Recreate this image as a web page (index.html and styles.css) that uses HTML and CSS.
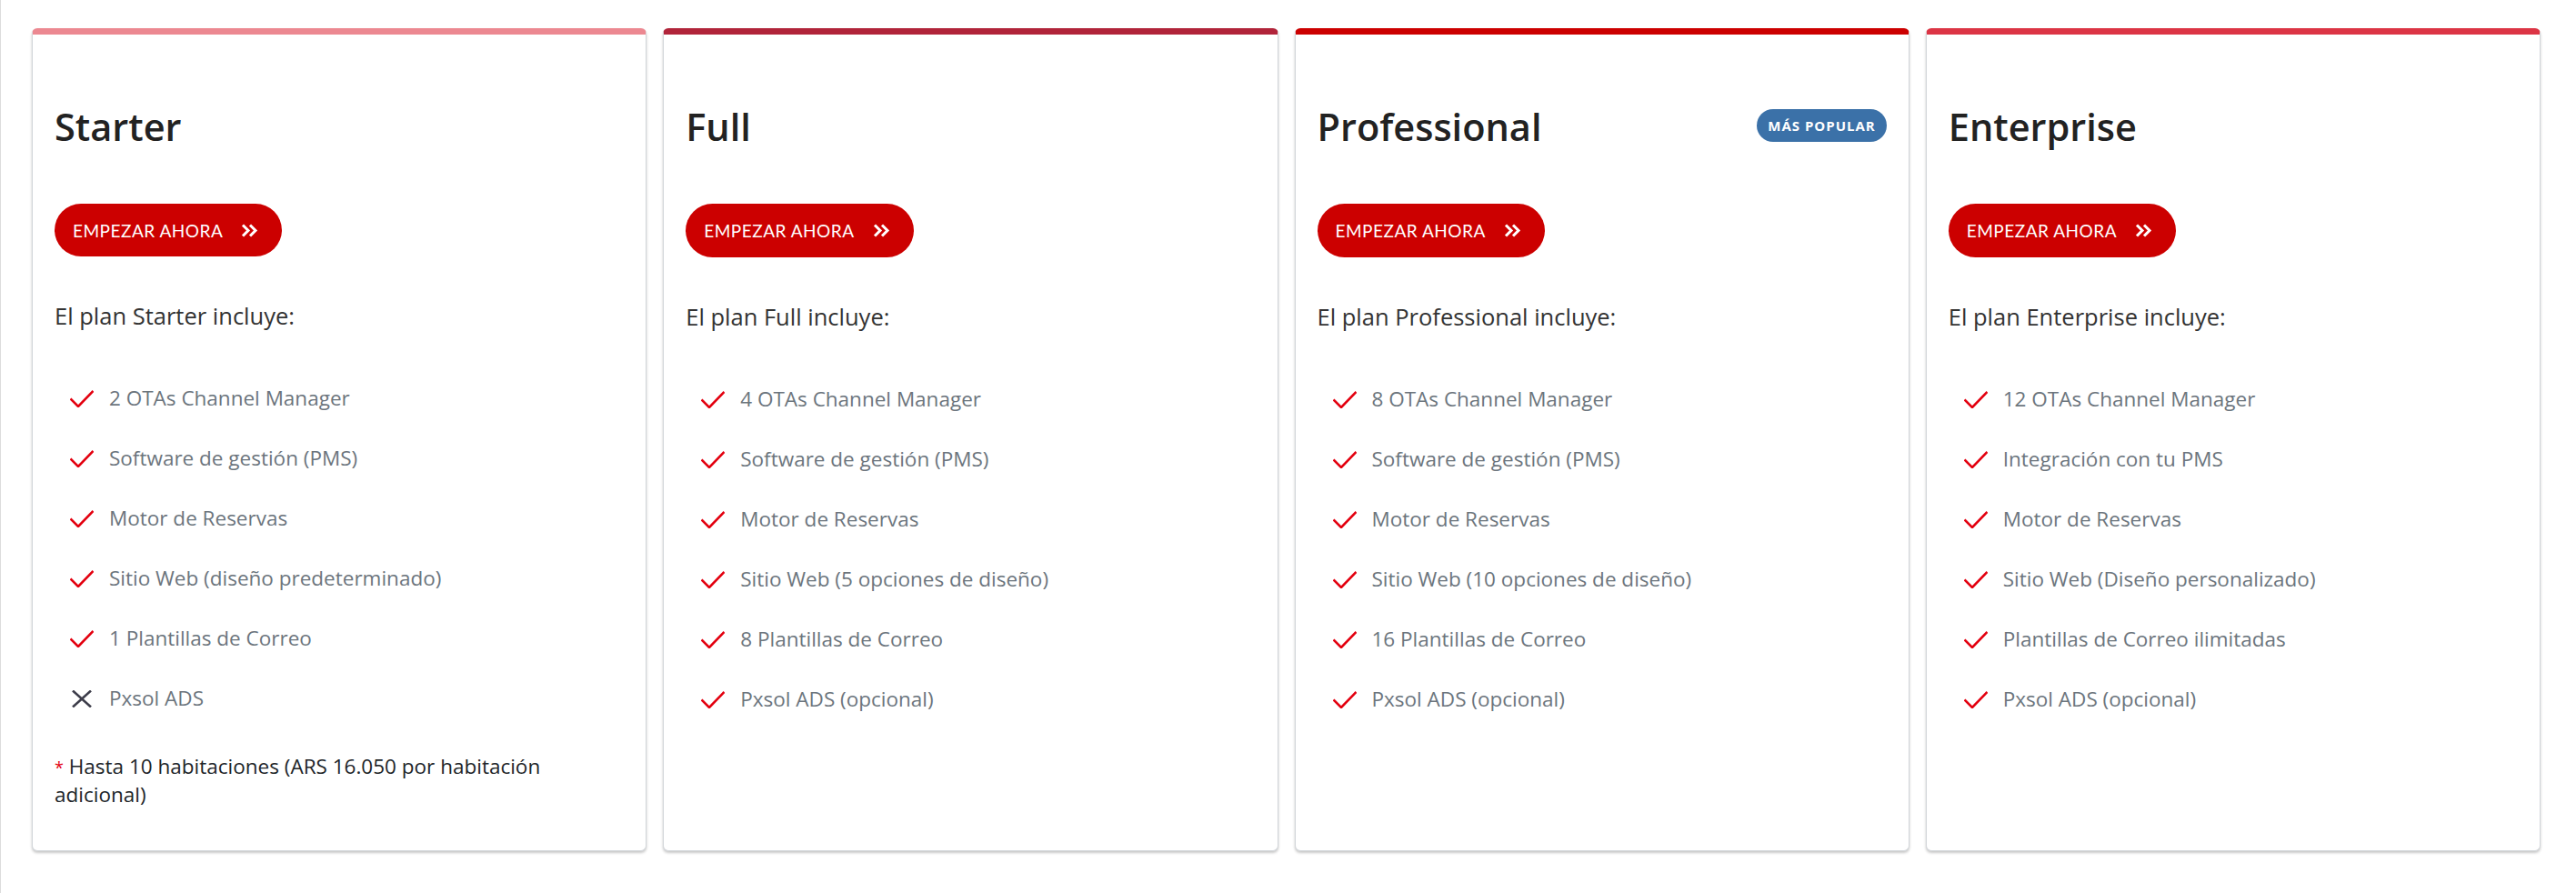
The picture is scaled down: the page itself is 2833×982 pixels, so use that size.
FILE: index.html
```html
<!DOCTYPE html>
<html lang="es">
<head>
<meta charset="utf-8">
<title>Planes</title>
<link rel="stylesheet" href="styles.css">
</head>
<body>
<div class="page">
  <div class="plans">
    <!-- Starter -->
    <div class="card card--starter">
      <div class="card-head">
        <h2 class="plan-name">Starter</h2>
      </div>
      <a class="btn" href="#">EMPEZAR AHORA
        <svg class="btn-ico" width="20" height="15" viewBox="0 0 20 15"><path d="M3 1.5 L9 7.5 L3 13.5 M11 1.5 L17 7.5 L11 13.5" fill="none" stroke="#fff" stroke-width="3"/></svg>
      </a>
      <p class="includes">El plan Starter incluye:</p>
      <ul class="features">
        <li><svg class="ico" width="26" height="19" viewBox="0 0 26 19"><path d="M0.5 9.5 L9 18 L25.5 1" fill="none" stroke="#e3000f" stroke-width="2.6"/></svg>2 OTAs Channel Manager</li>
        <li><svg class="ico" width="26" height="19" viewBox="0 0 26 19"><path d="M0.5 9.5 L9 18 L25.5 1" fill="none" stroke="#e3000f" stroke-width="2.6"/></svg>Software de gestión (PMS)</li>
        <li><svg class="ico" width="26" height="19" viewBox="0 0 26 19"><path d="M0.5 9.5 L9 18 L25.5 1" fill="none" stroke="#e3000f" stroke-width="2.6"/></svg>Motor de Reservas</li>
        <li><svg class="ico" width="26" height="19" viewBox="0 0 26 19"><path d="M0.5 9.5 L9 18 L25.5 1" fill="none" stroke="#e3000f" stroke-width="2.6"/></svg>Sitio Web (diseño predeterminado)</li>
        <li><svg class="ico" width="26" height="19" viewBox="0 0 26 19"><path d="M0.5 9.5 L9 18 L25.5 1" fill="none" stroke="#e3000f" stroke-width="2.6"/></svg>1 Plantillas de Correo</li>
        <li><svg class="ico" width="26" height="19" viewBox="0 0 26 19"><path d="M3 0.5 L23 18.5 M23 0.5 L3 18.5" fill="none" stroke="#3d3d4a" stroke-width="2.6"/></svg>Pxsol ADS</li>
      </ul>
      <p class="note"><span class="ast">*</span> Hasta 10 habitaciones (ARS 16.050 por habitación adicional)</p>
    </div>

    <!-- Full -->
    <div class="card card--full">
      <div class="card-head">
        <h2 class="plan-name">Full</h2>
      </div>
      <a class="btn" href="#">EMPEZAR AHORA
        <svg class="btn-ico" width="20" height="15" viewBox="0 0 20 15"><path d="M3 1.5 L9 7.5 L3 13.5 M11 1.5 L17 7.5 L11 13.5" fill="none" stroke="#fff" stroke-width="3"/></svg>
      </a>
      <p class="includes">El plan Full incluye:</p>
      <ul class="features">
        <li><svg class="ico" width="26" height="19" viewBox="0 0 26 19"><path d="M0.5 9.5 L9 18 L25.5 1" fill="none" stroke="#e3000f" stroke-width="2.6"/></svg>4 OTAs Channel Manager</li>
        <li><svg class="ico" width="26" height="19" viewBox="0 0 26 19"><path d="M0.5 9.5 L9 18 L25.5 1" fill="none" stroke="#e3000f" stroke-width="2.6"/></svg>Software de gestión (PMS)</li>
        <li><svg class="ico" width="26" height="19" viewBox="0 0 26 19"><path d="M0.5 9.5 L9 18 L25.5 1" fill="none" stroke="#e3000f" stroke-width="2.6"/></svg>Motor de Reservas</li>
        <li><svg class="ico" width="26" height="19" viewBox="0 0 26 19"><path d="M0.5 9.5 L9 18 L25.5 1" fill="none" stroke="#e3000f" stroke-width="2.6"/></svg>Sitio Web (5 opciones de diseño)</li>
        <li><svg class="ico" width="26" height="19" viewBox="0 0 26 19"><path d="M0.5 9.5 L9 18 L25.5 1" fill="none" stroke="#e3000f" stroke-width="2.6"/></svg>8 Plantillas de Correo</li>
        <li><svg class="ico" width="26" height="19" viewBox="0 0 26 19"><path d="M0.5 9.5 L9 18 L25.5 1" fill="none" stroke="#e3000f" stroke-width="2.6"/></svg>Pxsol ADS (opcional)</li>
      </ul>
    </div>

    <!-- Professional -->
    <div class="card card--pro">
      <div class="card-head">
        <h2 class="plan-name">Professional</h2>
        <span class="badge">MÁS POPULAR</span>
      </div>
      <a class="btn" href="#">EMPEZAR AHORA
        <svg class="btn-ico" width="20" height="15" viewBox="0 0 20 15"><path d="M3 1.5 L9 7.5 L3 13.5 M11 1.5 L17 7.5 L11 13.5" fill="none" stroke="#fff" stroke-width="3"/></svg>
      </a>
      <p class="includes">El plan Professional incluye:</p>
      <ul class="features">
        <li><svg class="ico" width="26" height="19" viewBox="0 0 26 19"><path d="M0.5 9.5 L9 18 L25.5 1" fill="none" stroke="#e3000f" stroke-width="2.6"/></svg>8 OTAs Channel Manager</li>
        <li><svg class="ico" width="26" height="19" viewBox="0 0 26 19"><path d="M0.5 9.5 L9 18 L25.5 1" fill="none" stroke="#e3000f" stroke-width="2.6"/></svg>Software de gestión (PMS)</li>
        <li><svg class="ico" width="26" height="19" viewBox="0 0 26 19"><path d="M0.5 9.5 L9 18 L25.5 1" fill="none" stroke="#e3000f" stroke-width="2.6"/></svg>Motor de Reservas</li>
        <li><svg class="ico" width="26" height="19" viewBox="0 0 26 19"><path d="M0.5 9.5 L9 18 L25.5 1" fill="none" stroke="#e3000f" stroke-width="2.6"/></svg>Sitio Web (10 opciones de diseño)</li>
        <li><svg class="ico" width="26" height="19" viewBox="0 0 26 19"><path d="M0.5 9.5 L9 18 L25.5 1" fill="none" stroke="#e3000f" stroke-width="2.6"/></svg>16 Plantillas de Correo</li>
        <li><svg class="ico" width="26" height="19" viewBox="0 0 26 19"><path d="M0.5 9.5 L9 18 L25.5 1" fill="none" stroke="#e3000f" stroke-width="2.6"/></svg>Pxsol ADS (opcional)</li>
      </ul>
    </div>

    <!-- Enterprise -->
    <div class="card card--ent">
      <div class="card-head">
        <h2 class="plan-name">Enterprise</h2>
      </div>
      <a class="btn" href="#">EMPEZAR AHORA
        <svg class="btn-ico" width="20" height="15" viewBox="0 0 20 15"><path d="M3 1.5 L9 7.5 L3 13.5 M11 1.5 L17 7.5 L11 13.5" fill="none" stroke="#fff" stroke-width="3"/></svg>
      </a>
      <p class="includes">El plan Enterprise incluye:</p>
      <ul class="features">
        <li><svg class="ico" width="26" height="19" viewBox="0 0 26 19"><path d="M0.5 9.5 L9 18 L25.5 1" fill="none" stroke="#e3000f" stroke-width="2.6"/></svg>12 OTAs Channel Manager</li>
        <li><svg class="ico" width="26" height="19" viewBox="0 0 26 19"><path d="M0.5 9.5 L9 18 L25.5 1" fill="none" stroke="#e3000f" stroke-width="2.6"/></svg>Integración con tu PMS</li>
        <li><svg class="ico" width="26" height="19" viewBox="0 0 26 19"><path d="M0.5 9.5 L9 18 L25.5 1" fill="none" stroke="#e3000f" stroke-width="2.6"/></svg>Motor de Reservas</li>
        <li><svg class="ico" width="26" height="19" viewBox="0 0 26 19"><path d="M0.5 9.5 L9 18 L25.5 1" fill="none" stroke="#e3000f" stroke-width="2.6"/></svg>Sitio Web (Diseño personalizado)</li>
        <li><svg class="ico" width="26" height="19" viewBox="0 0 26 19"><path d="M0.5 9.5 L9 18 L25.5 1" fill="none" stroke="#e3000f" stroke-width="2.6"/></svg>Plantillas de Correo ilimitadas</li>
        <li><svg class="ico" width="26" height="19" viewBox="0 0 26 19"><path d="M0.5 9.5 L9 18 L25.5 1" fill="none" stroke="#e3000f" stroke-width="2.6"/></svg>Pxsol ADS (opcional)</li>
      </ul>
    </div>
  </div>
</div>
</body>
</html>
```

FILE: styles.css
```css
* { box-sizing: border-box; }

html, body {
  margin: 0;
  padding: 0;
  background: #fff;
}

body {
  font-family: "Open Sans", "Noto Sans", sans-serif;
  color: #212529;
}

.page {
  min-height: 982px;
  border-left: 1px solid #dcdcdc;
  padding: 31px 39px 0 34px;
}

.plans {
  display: grid;
  grid-template-columns: repeat(4, 1fr);
  column-gap: 18px;
  align-items: stretch;
}

.card {
  background: #fff;
  border: 1px solid #d2d6da;
  border-top: 7px solid #ec8891;
  border-radius: 6px;
  box-shadow: 0 2px 3px rgba(0, 0, 0, 0.22);
  padding: 77px 24px 46px 24px;
  display: flex;
  flex-direction: column;
  align-items: flex-start;
  height: 905px;
}

.card--starter { border-top-color: #ec8891; }
.card--full { border-top-color: #b1243a; }
.card--pro { border-top-color: #cc0000; }
.card--ent { border-top-color: #dc3545; }

.card-head {
  width: 100%;
  display: flex;
  align-items: center;
  justify-content: space-between;
}

.plan-name {
  margin: 0;
  font-size: 41.5px;
  line-height: 48px;
  font-weight: 600;
  color: #222;
}

.badge {
  background: #3b71a8;
  color: #fff;
  font-size: 15px;
  font-weight: 700;
  letter-spacing: 1px;
  line-height: 36px;
  height: 36px;
  padding: 0 12px;
  border-radius: 18px;
  margin-top: -2px;
}

.btn {
  margin-top: 61px;
  height: 59px;
  display: inline-flex;
  align-items: center;
  gap: 19px;
  padding: 0 26px 0 20px;
  background: #cc0000;
  color: #fff;
  border-radius: 30px;
  text-decoration: none;
  font-family: "Lato", "Open Sans", sans-serif;
  font-size: 19px;
  letter-spacing: 0.5px;
  font-weight: 400;
}

.btn-ico { display: block; }

.includes {
  margin: 49px 0 0 0;
  font-size: 25.5px;
  line-height: 32px;
  color: #333;
}

.features {
  list-style: none;
  margin: 42px 0 0 0;
  padding: 0 0 0 17px;
}

.features li {
  display: flex;
  align-items: center;
  gap: 17px;
  height: 66px;
  line-height: 66px;
  font-size: 22.5px;
  color: #6c757d;
}

.ico { display: block; flex: none; }

.note {
  margin: 27px 0 0 0;
  font-size: 22.5px;
  line-height: 30px;
  color: #212529;
}

.ast {
  color: #e3000f;
  font-size: 18px;
}
```
